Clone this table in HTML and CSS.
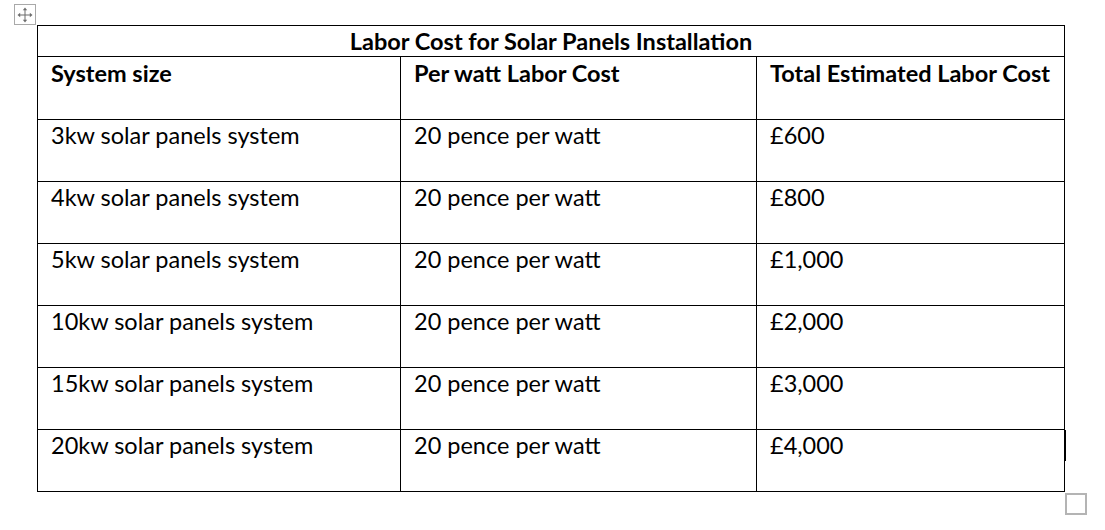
FILE: index.html
```html
<!DOCTYPE html>
<html lang="en">
<head>
<meta charset="utf-8">
<title>Labor Cost for Solar Panels Installation</title>
<link rel="stylesheet" href="styles.css">
</head>
<body>
<div class="page">
  <div class="move-handle">
    <svg width="16" height="16" viewBox="0 0 16 16" aria-hidden="true">
      <g fill="#6d6d6d" stroke="none">
        <rect x="7.5" y="2" width="1" height="12"/>
        <rect x="2" y="7.5" width="12" height="1"/>
        <polygon points="8,0.5 5.8,3.2 10.2,3.2"/>
        <polygon points="8,15.5 5.8,12.8 10.2,12.8"/>
        <polygon points="0.5,8 3.2,5.8 3.2,10.2"/>
        <polygon points="15.5,8 12.8,5.8 12.8,10.2"/>
      </g>
    </svg>
  </div>
  <div class="table-wrap">
    <table class="cost-table">
      <colgroup>
        <col class="c1"><col class="c2"><col class="c3">
      </colgroup>
      <tr class="title-row"><th colspan="3">Labor Cost for Solar Panels Installation</th></tr>
      <tr class="head-row"><th>System size</th><th>Per watt Labor Cost</th><th>Total Estimated Labor Cost</th></tr>
      <tr><td>3kw solar panels system</td><td>20 pence per watt</td><td>£600</td></tr>
      <tr><td>4kw solar panels system</td><td>20 pence per watt</td><td>£800</td></tr>
      <tr><td>5kw solar panels system</td><td>20 pence per watt</td><td>£1,000</td></tr>
      <tr><td>10kw solar panels system</td><td>20 pence per watt</td><td>£2,000</td></tr>
      <tr><td>15kw solar panels system</td><td>20 pence per watt</td><td>£3,000</td></tr>
      <tr><td>20kw solar panels system</td><td>20 pence per watt</td><td>£4,000</td></tr>
    </table>
    <span class="caret"></span>
    <span class="resize-handle"></span>
  </div>
</div>
</body>
</html>
```
FILE: styles.css
```css
html, body {
  margin: 0;
  padding: 0;
  background: #ffffff;
}
body {
  font-family: Lato, "Open Sans", sans-serif;
  color: #000;
}
.page {
  position: relative;
  width: 1105px;
  height: 530px;
  padding: 25px 0 0 37px;
  box-sizing: border-box;
}
.move-handle {
  position: absolute;
  left: 14px;
  top: 4px;
  width: 20px;
  height: 19px;
  border: 1px solid #a9a9a9;
  background: #fff;
  display: flex;
  align-items: center;
  justify-content: center;
}
.table-wrap {
  position: relative;
  width: 1027px;
}
.cost-table {
  border-collapse: collapse;
  table-layout: fixed;
  width: 1027px;
  font-size: 23.5px;
}
.c1 { width: 363px; }
.c2 { width: 356px; }
.c3 { width: 308px; }
.cost-table th,
.cost-table td {
  border: 1px solid #000;
  text-align: left;
  vertical-align: top;
  padding: 1px 13px 0 13px;
  line-height: 28px;
  white-space: nowrap;
}
.cost-table th { font-weight: 700; }
.cost-table td { font-weight: 400; }
.title-row th {
  text-align: center;
  height: 31px;
  padding: 1px 0 0 0;
  box-sizing: border-box;
}
.head-row th { height: 63px; padding-top: 2px; box-sizing: border-box; }
.cost-table td { height: 62px; box-sizing: border-box; }
.caret {
  position: absolute;
  left: 1028px;
  top: 405px;
  width: 1px;
  height: 31px;
  background: #000;
}
.resize-handle {
  position: absolute;
  left: 1028px;
  top: 468px;
  width: 18px;
  height: 18px;
  border: 2px solid #b4b4b4;
  background: #fff;
}
```
